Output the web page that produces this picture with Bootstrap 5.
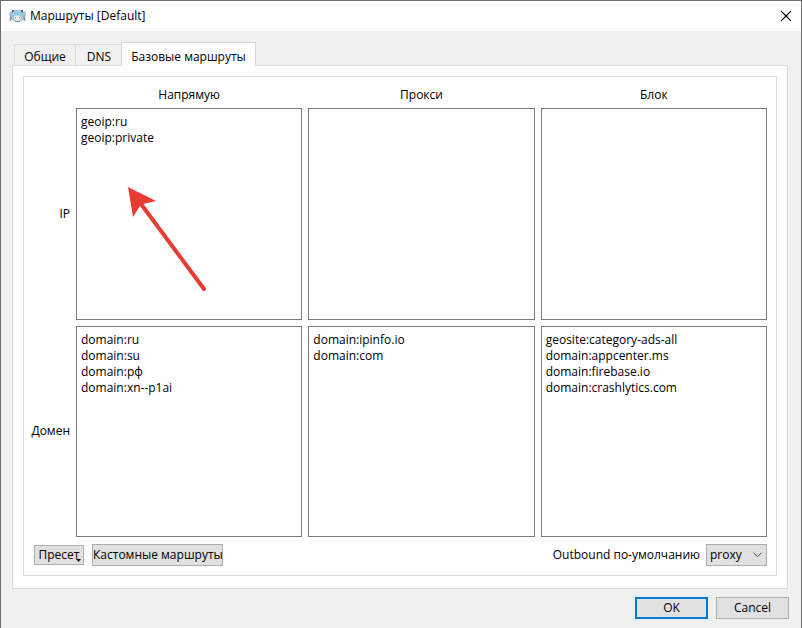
<!DOCTYPE html>
<html lang="ru">
<head>
<meta charset="utf-8">
<meta name="viewport" content="width=device-width, initial-scale=1">
<title>Маршруты [Default]</title>
<link href="https://cdn.jsdelivr.net/npm/bootstrap@5.3.0/dist/css/bootstrap.min.css" rel="stylesheet">
<style>
  body { font-family: "Open Sans", "Noto Sans", sans-serif; font-size: 12px; line-height: 16px; color: #000; background: #f0f0f0; }
  .dialog { border: 1px solid #6e6e6e; border-bottom: 0; }
  .titlebar { height: 30px; padding: 0 8px; }
  .titlebar h1 { font-size: 12px; line-height: 16px; font-weight: 400; }
  .close-btn { width: 14px; height: 14px; }
  .tab-strip { margin: 0 11px; padding-left: 2px; height: 34px; border: 0; }
  .tab-strip .nav-link { color: #000; border: 1px solid #d9d9d9; border-bottom: 0; border-radius: 0; background: #f0f0f0; height: 21px; padding: 3px 0 0; margin: 0; }
  .tab-strip .tab-common { width: 62px; }
  .tab-strip .tab-dns { width: 47px; border-left: 0; }
  .tab-strip .tab-routes.active { width: 135px; height: 24px; padding-top: 4px; margin: 0 0 -1px -2px; background: #fff; color: #000; border-color: #d9d9d9; position: relative; z-index: 1; }
  .tab-strip .nav-link:hover { border-color: #d9d9d9; }
  .pane { margin: 0 13px 0 11px; padding: 10px 10px 12px; background: #fff; border: 1px solid #dcdcdc; }
  .frame { border: 1px solid #dcdcdc; padding: 0 9px 9px; }
  .routes { display: grid; grid-template-columns: 37px repeat(3, minmax(0, 1fr)); grid-template-rows: 25px 1fr 1fr; gap: 6px; }
  .head { padding-top: 10px; }
  .rules { border: 1px solid #7a7a7a; border-radius: 0; padding: 5px 4px; font-size: 12px; line-height: 16px; color: #000; resize: none; min-height: 100px; }
  .rules:focus { border-color: #0078d7; box-shadow: none; color: #000; }
  .arrow { position: absolute; left: 50px; top: 76px; pointer-events: none; }
  .win-btn { --bs-btn-color: #000; --bs-btn-bg: #e1e1e1; --bs-btn-border-color: #adadad; --bs-btn-hover-color: #000; --bs-btn-hover-bg: #e5f1fb; --bs-btn-hover-border-color: #0078d7; --bs-btn-border-radius: 0; --bs-btn-padding-x: 0; --bs-btn-padding-y: 0; --bs-btn-font-size: 12px; line-height: 16px; height: 22px; white-space: nowrap; }
  .preset { width: 50px; height: 20px; }
  .preset-mark { position: absolute; right: 2px; bottom: 2px; }
  .custom { width: 131px; }
  .dlg { width: 73px; }
  .ok { --bs-btn-border-color: #0078d7; --bs-btn-border-width: 2px; }
  .outbound { width: 61px; height: 22px; padding: 0 16px 0 3px; font-size: 12px; line-height: 20px; color: #000; border: 1px solid #adadad; border-radius: 0; background-color: #e1e1e1; background-position: right 4px center; background-size: 9px 6px; background-image: url("data:image/svg+xml,%3Csvg xmlns='http://www.w3.org/2000/svg' viewBox='0 0 9 6'%3E%3Cpath d='M.5 .7l4 4 4-4' fill='none' stroke='%23444'/%3E%3C/svg%3E"); }
  .outbound-label { margin-right: 6px; }
  .tools { margin-top: 7px; padding-left: 1px; }
  .footer { padding: 8px 12px 9px; }
</style>
</head>
<body>
<div class="dialog min-vh-100 d-flex flex-column">
  <header class="titlebar bg-white d-flex align-items-center">
    <svg class="me-1" width="17" height="14" viewBox="0 0 17 14" aria-hidden="true">
      <path d="M2 3l3-2h7l3 2v7l-2 2H4l-2-2z" fill="#a9cfe2"/>
      <path d="M1 2l2 1 1 3-2 5H0l1-3-1-3zM16 2l-2 1-1 3 2 5h2l-1-3 1-3z" fill="#b3bec6"/>
      <path d="M1 6l2 2-1 4H1zM16 6l-2 2 1 4h1z" fill="#8796a0"/>
      <path d="M4 6l2-4 3-1 3 2 1 4-1 4-2 1H6l-2-2z" fill="#8fcbe6"/>
      <path d="M5 8l2-2 1 1 2-1 2 2-1 3-2 1H7l-2-2z" fill="#f0e2de"/>
      <path d="M3 1h2v1L3 4zM12 1h2v3l-2-2z" fill="#4d5565"/>
      <path d="M6 8h1v1H6zM10 8h1v1h-1z" fill="#5996b4"/>
      <path d="M6 12h5v1H6z" fill="#7c8999"/>
    </svg>
    <h1 class="m-0 flex-grow-1">Маршруты [Default]</h1>
    <button type="button" class="close-btn btn p-0 border-0 d-flex align-items-center justify-content-center" aria-label="Закрыть">
      <svg width="12" height="12" viewBox="0 0 12 12"><path d="M1 1l10 10M11 1L1 11" fill="none" stroke="#000" stroke-width="1.1"/></svg>
    </button>
  </header>

  <ul class="tab-strip nav nav-tabs align-items-end flex-nowrap" role="tablist">
    <li class="nav-item" role="presentation"><button type="button" class="nav-link tab-common" role="tab" aria-selected="false">Общие</button></li>
    <li class="nav-item" role="presentation"><button type="button" class="nav-link tab-dns" role="tab" aria-selected="false">DNS</button></li>
    <li class="nav-item" role="presentation"><button type="button" class="nav-link tab-routes active" role="tab" aria-selected="true">Базовые маршруты</button></li>
  </ul>

  <main class="pane flex-grow-1 d-flex">
    <div class="frame flex-grow-1 d-flex flex-column">
      <div class="routes flex-grow-1">
        <span></span>
        <div class="head d-flex align-items-center justify-content-center">Напрямую</div>
        <div class="head d-flex align-items-center justify-content-center">Прокси</div>
        <div class="head d-flex align-items-center justify-content-center">Блок</div>

        <label for="ip-direct" class="d-flex align-items-center justify-content-end">IP</label>
        <div class="position-relative">
          <textarea id="ip-direct" class="rules form-control h-100" spellcheck="false">geoip:ru
geoip:private</textarea>
          <svg class="arrow" width="82" height="108" viewBox="0 0 82 108" aria-hidden="true">
            <path d="M15 20L78 105" stroke="#e63c31" stroke-width="4" stroke-linecap="round"/>
            <path d="M2 3L30 17 17 20 14 22 7 33z" fill="#e63c31"/>
          </svg>
        </div>
        <textarea class="rules form-control" aria-label="IP, Прокси" spellcheck="false"></textarea>
        <textarea class="rules form-control" aria-label="IP, Блок" spellcheck="false"></textarea>

        <label for="domain-direct" class="d-flex align-items-center justify-content-end">Домен</label>
        <textarea id="domain-direct" class="rules form-control" spellcheck="false">domain:ru
domain:su
domain:рф
domain:xn--p1ai</textarea>
        <textarea class="rules form-control" aria-label="Домен, Прокси" spellcheck="false">domain:ipinfo.io
domain:com</textarea>
        <textarea class="rules form-control" aria-label="Домен, Блок" spellcheck="false">geosite:category-ads-all
domain:appcenter.ms
domain:firebase.io
domain:crashlytics.com</textarea>
      </div>

      <div class="tools d-flex align-items-center">
        <button type="button" class="btn win-btn preset position-relative me-2">Пресет<svg class="preset-mark" width="5" height="3" viewBox="0 0 5 3" aria-hidden="true"><path d="M0 0h5L2.500 3z"/></svg></button>
        <button type="button" class="btn win-btn custom">Кастомные маршруты</button>
        <label for="outbound" class="outbound-label ms-auto">Outbound по-умолчанию</label>
        <select id="outbound" class="form-select outbound"><option>proxy</option><option>direct</option></select>
      </div>
    </div>
  </main>

  <footer class="footer d-flex justify-content-end gap-2">
    <button type="button" class="btn win-btn dlg ok">OK</button>
    <button type="button" class="btn win-btn dlg">Cancel</button>
  </footer>
</div>
<script src="https://cdn.jsdelivr.net/npm/bootstrap@5.3.0/dist/js/bootstrap.bundle.min.js"></script>
</body>
</html>
